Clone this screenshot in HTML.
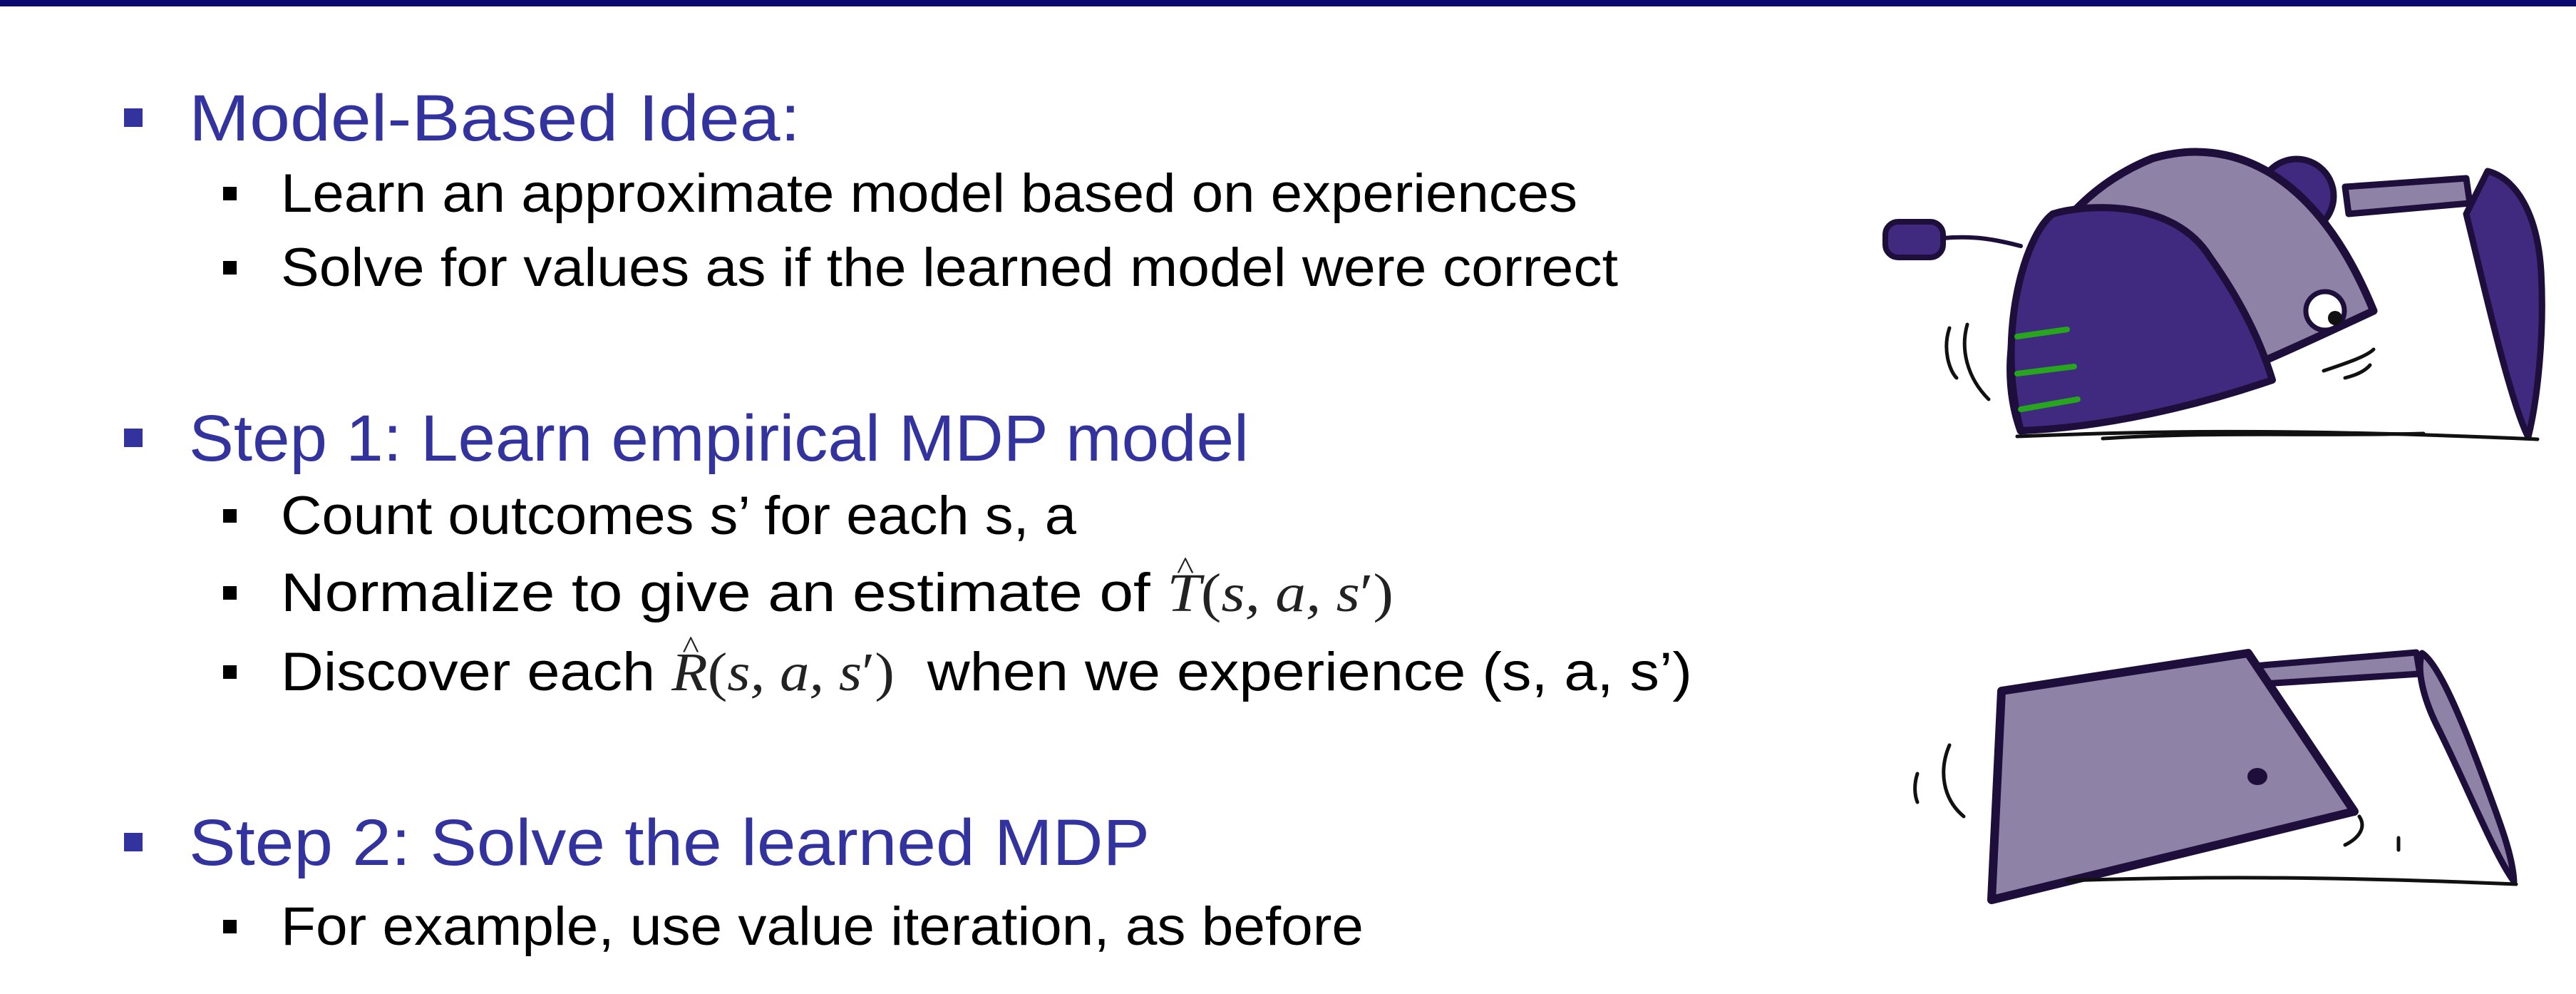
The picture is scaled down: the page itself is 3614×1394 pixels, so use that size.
<!DOCTYPE html>
<html><head><meta charset="utf-8">
<style>
html,body{margin:0;padding:0;background:#fff;}
body{width:3614px;height:1394px;position:relative;overflow:hidden;font-family:"Liberation Sans",sans-serif;}
.bar{position:absolute;left:0;top:0;width:3614px;height:9px;background:#0a0a6e;}
.l{position:absolute;white-space:nowrap;line-height:1;transform-origin:0 50%;display:inline-block;}
.h{color:#3333a0;font-size:92px;}
.s{color:#000;font-size:76px;}
.b{position:absolute;}
.hb{width:26px;height:26px;background:#3333a0;}
.sb{width:19px;height:19px;background:#000;}
.m{font-family:"Liberation Serif",serif;font-style:italic;color:#222;}
.m .u{font-style:normal;}
</style></head><body>
<div class="bar"></div>

<div class="b hb" style="left:174px;top:152px"></div>
<div class="l h" id="t0" style="left:265px;top:120px">Model-Based Idea:</div>
<div class="b sb" style="left:313px;top:262px"></div>
<div class="l s" id="t1" style="left:394px;top:234px">Learn an approximate model based on experiences</div>
<div class="b sb" style="left:313px;top:366px"></div>
<div class="l s" id="t2" style="left:394px;top:338px">Solve for values as if the learned model were correct</div>

<div class="b hb" style="left:174px;top:601px"></div>
<div class="l h" id="t3" style="left:265px;top:569px">Step 1: Learn empirical MDP model</div>
<div class="b sb" style="left:313px;top:714px"></div>
<div class="l s" id="t4" style="left:394px;top:686px">Count outcomes s’ for each s, a</div>
<div class="b sb" style="left:313px;top:822px"></div>
<div class="l s" id="t5" style="left:394px;top:794px">Normalize to give an estimate of <span class="m"><span style="position:relative">T<span style="position:absolute;left:12px;top:-16px;font-style:normal;font-size:46px">^</span></span><span class="u">(</span>s, a, s<span class="u">′</span><span class="u">)</span></span></div>
<div class="b sb" style="left:313px;top:933px"></div>
<div class="l s" id="t6" style="left:394px;top:905px">Discover each <span class="m"><span style="position:relative">R<span style="position:absolute;left:14px;top:-16px;font-style:normal;font-size:46px">^</span></span><span class="u">(</span>s, a, s<span class="u">′</span><span class="u">)</span></span>&nbsp; when we experience (s, a, s’)</div>

<div class="b hb" style="left:174px;top:1168px"></div>
<div class="l h" id="t7" style="left:265px;top:1136px">Step 2: Solve the learned MDP</div>
<div class="b sb" style="left:313px;top:1290px"></div>
<div class="l s" id="t8" style="left:394px;top:1262px">For example, use value iteration, as before</div>

<svg style="position:absolute;left:0;top:0" width="3614" height="1394" viewBox="0 0 3614 1394">
<g stroke="#1e0e3c" stroke-linejoin="round" stroke-linecap="round">
 <path d="M2726 334 C2770 330 2800 336 2835 345" fill="none" stroke-width="6"/>
 <rect x="2645" y="311" width="81" height="50" rx="18" fill="#3f2a80" stroke-width="8"/>
 <circle cx="3222" cy="275" r="52" fill="#3f2a80" stroke-width="9"/>
 <path d="M3290 262 L3460 250 L3465 285 L3295 300 Z" fill="#8e82a6" stroke-width="9"/>
 <path d="M3490 240 C3530 250 3560 300 3565 380 C3570 470 3560 560 3547 613 C3520 560 3480 380 3460 300 Z" fill="#3f2a80" stroke-width="9"/>
 <path d="M2835 604 C2790 480 2850 290 3020 222 C3130 190 3250 240 3330 436 C3150 520 3000 590 2835 604 Z" fill="#8e82a6" stroke-width="11"/>
 <path d="M2835 604 C2800 470 2840 330 2880 300 C2930 285 3050 280 3100 360 C3150 430 3175 490 3188 533 C3080 570 2950 600 2835 604 Z" fill="#3f2a80" stroke-width="10"/>
 <circle cx="3262" cy="436" r="27" fill="#fff" stroke-width="7"/>
 <circle cx="3276" cy="446" r="10" fill="#111" stroke="none"/>
 <g stroke="#27a51d" stroke-width="8">
  <path d="M2830 472 L2900 462"/><path d="M2830 524 L2910 514"/><path d="M2835 574 L2915 560"/>
 </g>
 <g fill="none" stroke="#111" stroke-width="5">
  <path d="M2830 612 C3000 605 3200 600 3560 616"/><path d="M2950 615 C3100 605 3250 612 3400 608"/>
  <path d="M2735 460 C2725 490 2735 520 2745 530"/><path d="M2760 455 C2750 490 2760 530 2790 560"/>
  <path d="M3260 520 C3290 510 3320 500 3330 490"/><path d="M3290 530 C3310 525 3320 518 3325 512"/>
 </g>
 <path d="M3150 935 L3390 915 L3395 945 L3160 960 Z" fill="#8e82a6" stroke-width="9"/>
 <path d="M3398 916 C3420 930 3450 1000 3480 1080 C3510 1160 3525 1200 3527 1236 C3500 1200 3460 1100 3420 1020 C3400 980 3390 940 3398 916 Z" fill="#8e82a6" stroke-width="9"/>
 <path d="M2808 969 L3154 916 L3303 1138 L2794 1262 Z" fill="#8e82a6" stroke-width="12"/>
 <ellipse cx="3167" cy="1089" rx="14" ry="12" fill="#1e0e3c" stroke="none"/>
 <g fill="none" stroke="#111" stroke-width="5">
  <path d="M2900 1235 C3100 1228 3300 1230 3530 1240"/>
  <path d="M2735 1045 C2720 1080 2725 1120 2755 1145"/><path d="M2690 1085 C2685 1100 2686 1115 2690 1125"/>
  <path d="M3310 1145 C3320 1160 3310 1175 3290 1185"/><path d="M3365 1175 L3365 1192"/>
 </g>
</g>
</svg>

<script>
var W={t0:858,t1:1819,t2:1876,t3:1487,t4:1116,t5:1561,t6:1980,t7:1348,t8:1519};
for(var k in W){var e=document.getElementById(k);var w=e.getBoundingClientRect().width;if(w>0)e.style.transform='scaleX('+(W[k]/w)+')';}
</script>
</body></html>
